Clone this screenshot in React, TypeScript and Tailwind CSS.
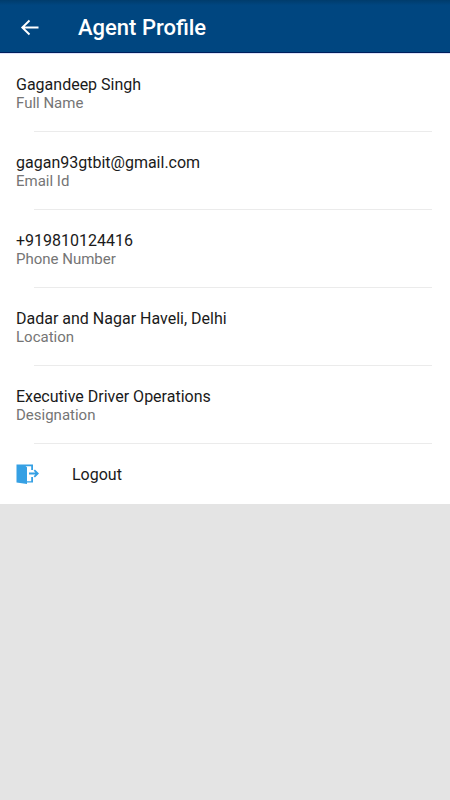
import React from 'react'

const details = [
  { label: 'Full Name', value: 'Gagandeep Singh' },
  { label: 'Email Id', value: 'gagan93gtbit@gmail.com' },
  { label: 'Phone Number', value: '+919810124416' },
  { label: 'Location', value: 'Dadar and Nagar Haveli, Delhi' },
  { label: 'Designation', value: 'Executive Driver Operations' },
]

const BackIcon = () => (
  <svg viewBox="0 0 20 20" className="h-5 w-5" fill="none" stroke="currentColor" strokeWidth="1.9">
    <path d="M18.500 9.500H2.500M9.500 2.500 2.300 9.500l7.200 7" />
  </svg>
)

const LogoutIcon = () => (
  <svg viewBox="0 0 24 20" className="h-5 w-6">
    <path d="M.5 0.500H17V6h-1.800V2.200H9.500l1.500 1v14h4.200V13H17v5.500h-6V20L.5 18.500z" fill="#35a0e4" />
    <path d="M13 9.500h8.500M18.300 6.200l3.400 3.300-3.400 3.300" fill="none" stroke="#35a0e4" strokeWidth="1.800" />
  </svg>
)

export default function App() {
  return (
    <div className="min-h-screen bg-[#e4e4e4] font-['Roboto',sans-serif]">
      <header className="flex h-[53px] items-center border-b border-[#001f5c] bg-[#004680] bg-linear-to-b from-[#003c6c] to-[#004680] to-10% px-5 pt-1 text-white">
        <button type="button" aria-label="Back">
          <BackIcon />
        </button>
        <h1 className="ml-[38px] text-[22px] leading-7 font-medium">Agent Profile</h1>
      </header>

      <main className="border-t border-[#dfe3fa] bg-white">
        <dl>
          {details.map((item) => (
            <div key={item.label} className="flex h-[78px] flex-col">
              <div className="flex grow flex-col-reverse justify-center px-4 pt-0.5">
                <dt className="text-[15px] leading-[18px] text-[#757575]">{item.label}</dt>
                <dd className="text-base leading-[18px] text-[#1a1a1a]">{item.value}</dd>
              </div>
              <div className="ml-[34px] mr-[18px] h-px bg-[#ebebeb]" />
            </div>
          ))}
        </dl>
        <button type="button" className="flex h-[60px] w-full items-center px-4 text-base text-[#1a1a1a]">
          <LogoutIcon />
          <span className="ml-8 pt-0.5">Logout</span>
        </button>
      </main>
    </div>
  )
}
